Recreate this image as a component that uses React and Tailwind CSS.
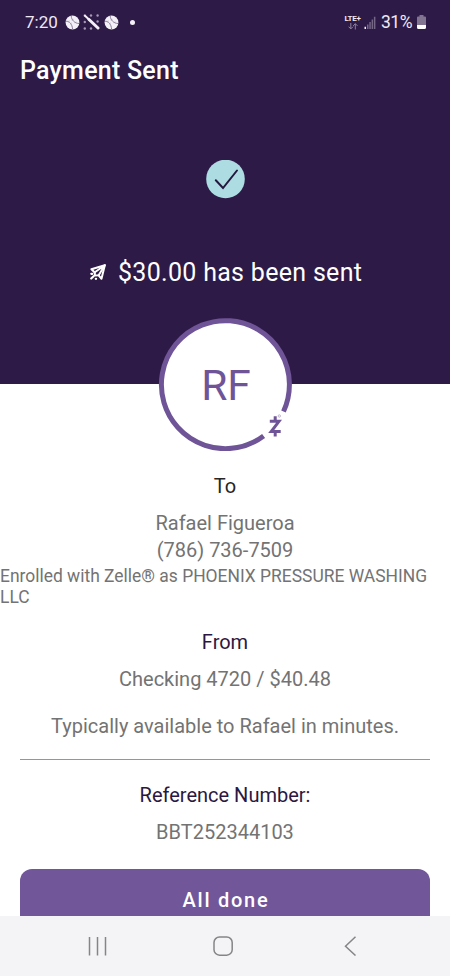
import React from "react";

function Baseball() {
  return (
    <svg className="h-[15px] w-[15px]" viewBox="0 0 15 15" fill="none">
      <circle cx="7.5" cy="7.5" r="6.9" fill="#f4f0f7" />
      <path d="M.9 6.200c3.400-.2 6.300 2.800 6.700 8M6.200.9c.3 4.200 3.500 7.500 7.900 7.600" stroke="#7d708c" strokeWidth=".9" />
      <path d="M4.200 5.400l-.8 2.200M6.900 7.800L5.200 9.200M8.600 4.300l-1.900.9M11 6.500L9.600 8.200" stroke="#a79db3" strokeWidth=".5" />
    </svg>
  );
}

function BatIcon() {
  const dots = [[1.8, 1.5], [8, 1.5], [14.6, 1.5], [1.8, 8], [14.6, 7.5], [1.8, 14.5], [8, 14.5]];
  return (
    <svg className="h-4 w-[17px]" viewBox="0 0 17 16">
      {dots.map(([x, y]) => (
        <circle key={`${x}-${y}`} cx={x} cy={y} r="1.2" fill="#a498b3" />
      ))}
      <path d="M2 1.800L6 5.500" stroke="#f4f0f7" strokeWidth="2" strokeLinecap="round" />
      <path d="M6 5.500L15 14" stroke="#f4f0f7" strokeWidth="3" strokeLinecap="round" />
    </svg>
  );
}

function StatusBar() {
  return (
    <div className="flex h-11 items-center pl-[25px] pr-6 text-[#eee9f3]">
      <span className="w-[33px] whitespace-nowrap text-[17px] leading-none">7:20</span>
      <div className="ml-[7px] flex items-center">
        <Baseball />
        <span className="ml-[3px]"><BatIcon /></span>
        <span className="ml-1"><Baseball /></span>
        <span className="ml-[11px] h-[5px] w-[5px] rounded-full bg-[#f4f0f7]" />
      </div>
      <div className="ml-auto flex items-center">
        <div className="flex w-[17px] flex-col items-center">
          <span className="whitespace-nowrap text-[8px] font-bold leading-[8px] tracking-[-0.3px]">LTE+</span>
          <svg className="h-[7px] w-[10px]" viewBox="0 0 10 7" fill="none" stroke="#8f83a0" strokeWidth="1">
            <path d="M2.800 0v5.800M.6 3.700l2.200 2.200L5 3.700M7.300 6.500V.8M5.100 2.900L7.300.7l2.200 2.200" />
          </svg>
        </div>
        <svg className="ml-[3px] h-[13px] w-3" viewBox="0 0 12 13">
          <path d="M3 8.500h1.500V13H3zM5.300 6h1.500v7H5.300zM7.600 3.500h1.500V13H7.600zM9.900 .8h1.500V13H9.900z" fill="#746685" />
          <path d="M.5 10.800H2V13H.5z" fill="#f4f0f7" />
        </svg>
        <span className="ml-[5px] w-[34px] whitespace-nowrap pt-px text-[17.5px] leading-none tracking-[-0.5px]">31%</span>
        <svg className="ml-[2px] h-[14px] w-[9px]" viewBox="0 0 9 14">
          <path d="M2.500 0h4v1.500H8a1 1 0 0 1 1 1V10H0V2.500a1 1 0 0 1 1-1h1.500z" fill="#817490" />
          <path d="M0 10h9v2.500A1.500 1.500 0 0 1 7.500 14h-6A1.500 1.500 0 0 1 0 12.500z" fill="#fff" />
        </svg>
      </div>
    </div>
  );
}

function PlaneIcon() {
  return (
    <svg className="h-[18px] w-[18px]" viewBox="0 0 18 18" fill="none" stroke="#fff" strokeWidth="2" strokeLinejoin="round" strokeLinecap="round">
      <path d="M15.800 1.200L2.400 5.200l3.400 3.300M15.800 1.200l-3.300 13.600-3-3.600" />
      <path d="M15.800 1.200L5.800 8.200v3.200l3.900-.1z" />
      <path d="M2.300 9.800h1M4.600 12.200l-2.400 2.300M6.800 14.800h.3" strokeWidth="2.200" />
    </svg>
  );
}

function Avatar() {
  return (
    <div className="relative mx-auto flex h-[134px] w-[134px] shrink-0 items-center justify-center">
      <svg className="absolute inset-0 h-full w-full" viewBox="0 0 134 134" fill="none">
        <circle cx="67.500" cy="67.500" r="65" fill="#fff" />
        <path d="M105.600 119A64 64 0 1 1 125.500 94.500" stroke="#6f5497" strokeWidth="5" />
        <path d="M111.800 104.300h9.200l-7.800 10.300h9.500" stroke="#6f5497" strokeWidth="3" />
        <path d="M117.200 99.300v4M117.200 115.500v4" stroke="#6f5497" strokeWidth="3" />
        <circle cx="121.300" cy="99" r="1.200" stroke="#a99bbf" strokeWidth=".7" />
      </svg>
      <span className="relative left-px top-0.5 text-[42.5px] leading-none text-[#6f5497]">RF</span>
    </div>
  );
}

function NavBar() {
  return (
    <nav className="flex h-[60px] shrink-0 items-center bg-[#f4f4f7] pl-[87px] pr-[92px] text-[#858587]">
      <svg className="h-5 w-5" viewBox="0 0 20 20" stroke="currentColor" strokeWidth="1.500">
        <path d="M2.500 1v18.500M10.500 1v18.500M18.500 1v18.500" />
      </svg>
      <svg className="ml-[106px] h-5 w-5" viewBox="0 0 20 20" fill="none" stroke="currentColor" strokeWidth="1.500">
        <rect x="1" y="1" width="18.200" height="18.200" rx="5.500" />
      </svg>
      <svg className="ml-auto h-5 w-[14px]" viewBox="0 0 14 20" fill="none" stroke="currentColor" strokeWidth="1.500">
        <path d="M11.500 .7L1.500 10.200l10 9.300" />
      </svg>
    </nav>
  );
}

export default function App() {
  return (
    <div className="flex h-[976px] w-[450px] flex-col overflow-hidden bg-white font-['Roboto',sans-serif] text-[#737373]">
      <header className="h-[384px] shrink-0 bg-[#2e1a47]">
        <StatusBar />
        <h1 className="pl-5 pt-[11px] text-[25px] font-medium leading-[31px] tracking-[0.25px] text-white">Payment Sent</h1>
        <div className="mt-[74px] flex justify-center">
          <svg className="h-[39px] w-[39px]" viewBox="0 0 39 39" fill="none">
            <circle cx="19.500" cy="19" r="19.300" fill="#addce2" />
            <path d="M9.800 20.300l7.200 7.700L31 10.500" stroke="#25183e" strokeWidth="2" strokeLinecap="round" />
          </svg>
        </div>
        <div className="mt-[57px] flex items-center pl-[89px] text-white">
          <PlaneIcon />
          <span className="ml-[11px] whitespace-nowrap pt-px text-[25px] leading-[32px] tracking-[0.3px]">$30.00 has been sent</span>
        </div>
      </header>
      <main className="flex min-h-0 flex-1 flex-col overflow-hidden text-center text-[20px] leading-[26px] -mt-[67px]">
        <Avatar />
        <p className="mt-[22px] text-[#262626]">To</p>
        <p className="mt-[11px]">Rafael Figueroa</p>
        <p className="mt-px">(786) 736-7509</p>
        <p className="mt-[3px] text-left text-[17.45px] leading-[20.5px]">Enrolled with Zelle® as PHOENIX PRESSURE WASHING LLC</p>
        <p className="mt-[22px] text-[#2a1842]">From</p>
        <p className="mt-[11px]">Checking 4720 / $40.48</p>
        <p className="mt-[21px]">Typically available to Rafael in minutes.</p>
        <div className="mx-5 mt-5 h-px shrink-0 bg-[#969696]" />
        <p className="mt-[22px] text-[#2a1842]">Reference Number:</p>
        <p className="mt-[11px]">BBT252344103</p>
        <button className="mx-5 mt-6 h-[62px] shrink-0 rounded-xl bg-[#715699] pl-0.5 text-[20px] font-medium tracking-[1.75px] text-white">All done</button>
      </main>
      <NavBar />
    </div>
  );
}
